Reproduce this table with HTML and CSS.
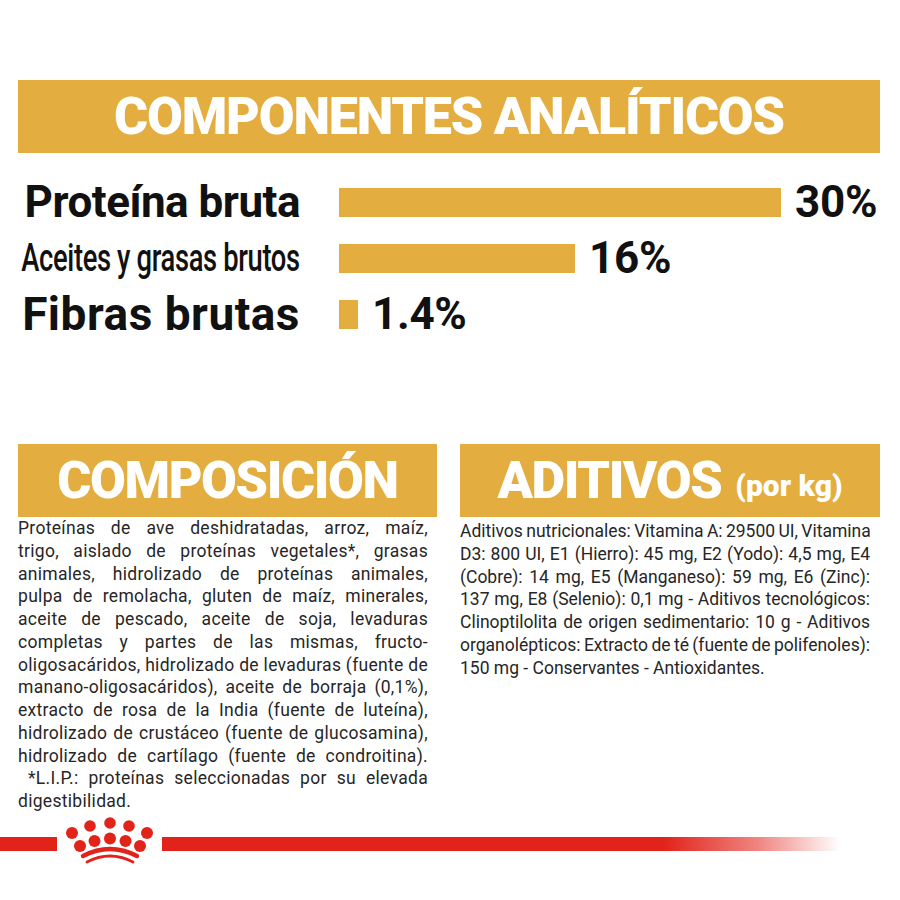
FILE: index.html
```html
<!DOCTYPE html>
<html lang="es">
<head>
<meta charset="utf-8">
<title>Componentes analíticos</title>
<link rel="stylesheet" href="styles.css">
</head>
<body>
<main class="sheet">
  <div class="banner banner-top">COMPONENTES ANALÍTICOS</div>

  <section class="analytics">
    <div class="row">
      <div class="label"><span class="lbl lbl-bold">Proteína bruta</span></div>
      <div class="bar" style="width:442px"></div>
      <div class="val">30%</div>
    </div>
    <div class="row">
      <div class="label"><span class="lbl lbl-cond">Aceites y grasas brutos</span></div>
      <div class="bar" style="width:236px"></div>
      <div class="val">16%</div>
    </div>
    <div class="row">
      <div class="label"><span class="lbl lbl-bold lbl-fib">Fibras brutas</span></div>
      <div class="bar" style="width:19px"></div>
      <div class="val">1.4%</div>
    </div>
  </section>

  <section class="columns">
    <div class="col">
      <div class="banner banner-sm">COMPOSICIÓN</div>
      <div class="text text-comp">
        <span class="ln">Proteínas de ave deshidratadas, arroz, maíz,</span>
        <span class="ln">trigo, aislado de proteínas vegetales*, grasas</span>
        <span class="ln">animales, hidrolizado de proteínas animales,</span>
        <span class="ln">pulpa de remolacha, gluten de maíz, minerales,</span>
        <span class="ln">aceite de pescado, aceite de soja, levaduras</span>
        <span class="ln">completas y partes de las mismas, fructo-</span>
        <span class="ln">oligosacáridos, hidrolizado de levaduras (fuente de</span>
        <span class="ln">manano-oligosacáridos), aceite de borraja (0,1%),</span>
        <span class="ln">extracto de rosa de la India (fuente de luteína),</span>
        <span class="ln">hidrolizado de crustáceo (fuente de glucosamina),</span>
        <span class="ln">hidrolizado de cartílago (fuente de condroitina).</span>
        <span class="ln ln-indent">*L.I.P.: proteínas seleccionadas por su elevada</span>
        <span class="ln ln-last">digestibilidad.</span>
      </div>
    </div>
    <div class="col">
      <div class="banner banner-sm">ADITIVOS <span class="small">(por kg)</span></div>
      <div class="text text-adit">
        <span class="ln ln-tight">Aditivos nutricionales: Vitamina A: 29500 UI, Vitamina</span>
        <span class="ln">D3: 800 UI, E1 (Hierro): 45 mg, E2 (Yodo): 4,5 mg, E4</span>
        <span class="ln">(Cobre): 14 mg, E5 (Manganeso): 59 mg, E6 (Zinc):</span>
        <span class="ln">137 mg, E8 (Selenio): 0,1 mg - Aditivos tecnológicos:</span>
        <span class="ln">Clinoptilolita de origen sedimentario: 10 g - Aditivos</span>
        <span class="ln ln-tight">organolépticos: Extracto de té (fuente de polifenoles):</span>
        <span class="ln ln-last">150 mg - Conservantes - Antioxidantes.</span>
      </div>
    </div>
  </section>
</main>

<footer class="footer">
  <div class="seg seg-left"></div>
  <svg class="crown" viewBox="57 815 105 50" width="105" height="50" aria-label="Royal Canin">
    <g fill="#E2231A">
      <circle cx="72" cy="833" r="6"/>
      <circle cx="90" cy="826" r="5.8"/>
      <circle cx="110" cy="823" r="5.8"/>
      <circle cx="129" cy="826" r="5.8"/>
      <circle cx="147" cy="833" r="6"/>
      <circle cx="80" cy="846" r="6"/>
      <circle cx="94.5" cy="841" r="6"/>
      <circle cx="110" cy="838.5" r="6"/>
      <circle cx="125.5" cy="841" r="6"/>
      <circle cx="140" cy="846" r="6"/>
    </g>
    <g fill="none" stroke="#E2231A" stroke-linecap="round">
      <path d="M83 856 Q110 842 137 856" stroke-width="4.4"/>
      <path d="M87 862 Q110 850 133 862" stroke-width="2.8"/>
    </g>
  </svg>
  <div class="seg seg-right"></div>
</footer>
</body>
</html>
```

FILE: styles.css
```css
html, body {
  margin: 0;
  padding: 0;
  background: #ffffff;
}

body {
  width: 900px;
  font-family: Roboto, "Liberation Sans", sans-serif;
  color: #1c1c1c;
}

.sheet {
  padding: 80px 20px 0 18px;
}

.banner {
  background: #E3AD40;
  color: #ffffff;
  font-family: Roboto, "Liberation Sans", sans-serif;
  font-weight: 900;
  display: flex;
  align-items: center;
  justify-content: center;
  white-space: nowrap;
}

.banner-top {
  height: 73px;
  font-size: 52px;
  letter-spacing: -1.2px;
}

.banner-sm {
  height: 73px;
  font-size: 52px;
  letter-spacing: -1.4px;
}

.banner-sm .small {
  font-size: 30px;
  letter-spacing: 0;
  margin-left: 14px;
  padding-top: 10px;
}

/* analytic rows */
.analytics {
  margin-top: 21px;
  padding-left: 5px;
}

.row {
  display: flex;
  align-items: center;
  height: 56px;
}

.label {
  width: 277px;
  display: flex;
  justify-content: flex-end;
  flex-shrink: 0;
}

.lbl {
  display: inline-block;
  white-space: nowrap;
  color: #111111;
  line-height: 1;
  transform-origin: right center;
}

.lbl-bold {
  font-weight: 700;
  font-size: 44px;
  letter-spacing: -0.5px;
}

.lbl-fib {
  font-size: 46px;
  letter-spacing: 0.5px;
}

.lbl-cond {
  font-weight: 500;
  font-size: 38px;
  letter-spacing: -0.5px;
  transform: scaleX(0.72);
}

.bar {
  margin-left: 39px;
  height: 29px;
  background: #E3AD40;
  flex-shrink: 0;
}

.val {
  margin-left: 14px;
  font-weight: 700;
  font-size: 44px;
  line-height: 1;
  color: #111111;
  letter-spacing: -0.3px;
}

/* two columns */
.columns {
  margin-top: 102px;
  display: grid;
  grid-template-columns: 419px 420px;
  column-gap: 23px;
  align-items: start;
}

.text {
  width: 410px;
  font-size: 17.5px;
  letter-spacing: 0.3px;
  line-height: 22.75px;
  color: #262626;
}

.text-adit {
  margin-top: 3px;
  letter-spacing: 0;
}

.ln {
  display: block;
  text-align: justify;
  text-align-last: justify;
  white-space: nowrap;
}

.ln-tight {
  letter-spacing: 0;
  word-spacing: -1px;
}

.ln-indent {
  padding-left: 10px;
}

.ln-last {
  text-align-last: left;
}

/* footer */
.footer {
  display: flex;
  align-items: flex-start;
  margin-top: 2px;
  height: 50px;
}

.seg {
  height: 14px;
  margin-top: 22px;
}

.seg-left {
  width: 57px;
  background: #E2231A;
}

.crown {
  display: block;
  flex-shrink: 0;
}

.seg-right {
  width: 678px;
  background: linear-gradient(to right, #E2231A 0%, #E2231A 74%, rgba(226, 35, 26, 0.55) 88%, rgba(226, 35, 26, 0) 100%);
}
```
